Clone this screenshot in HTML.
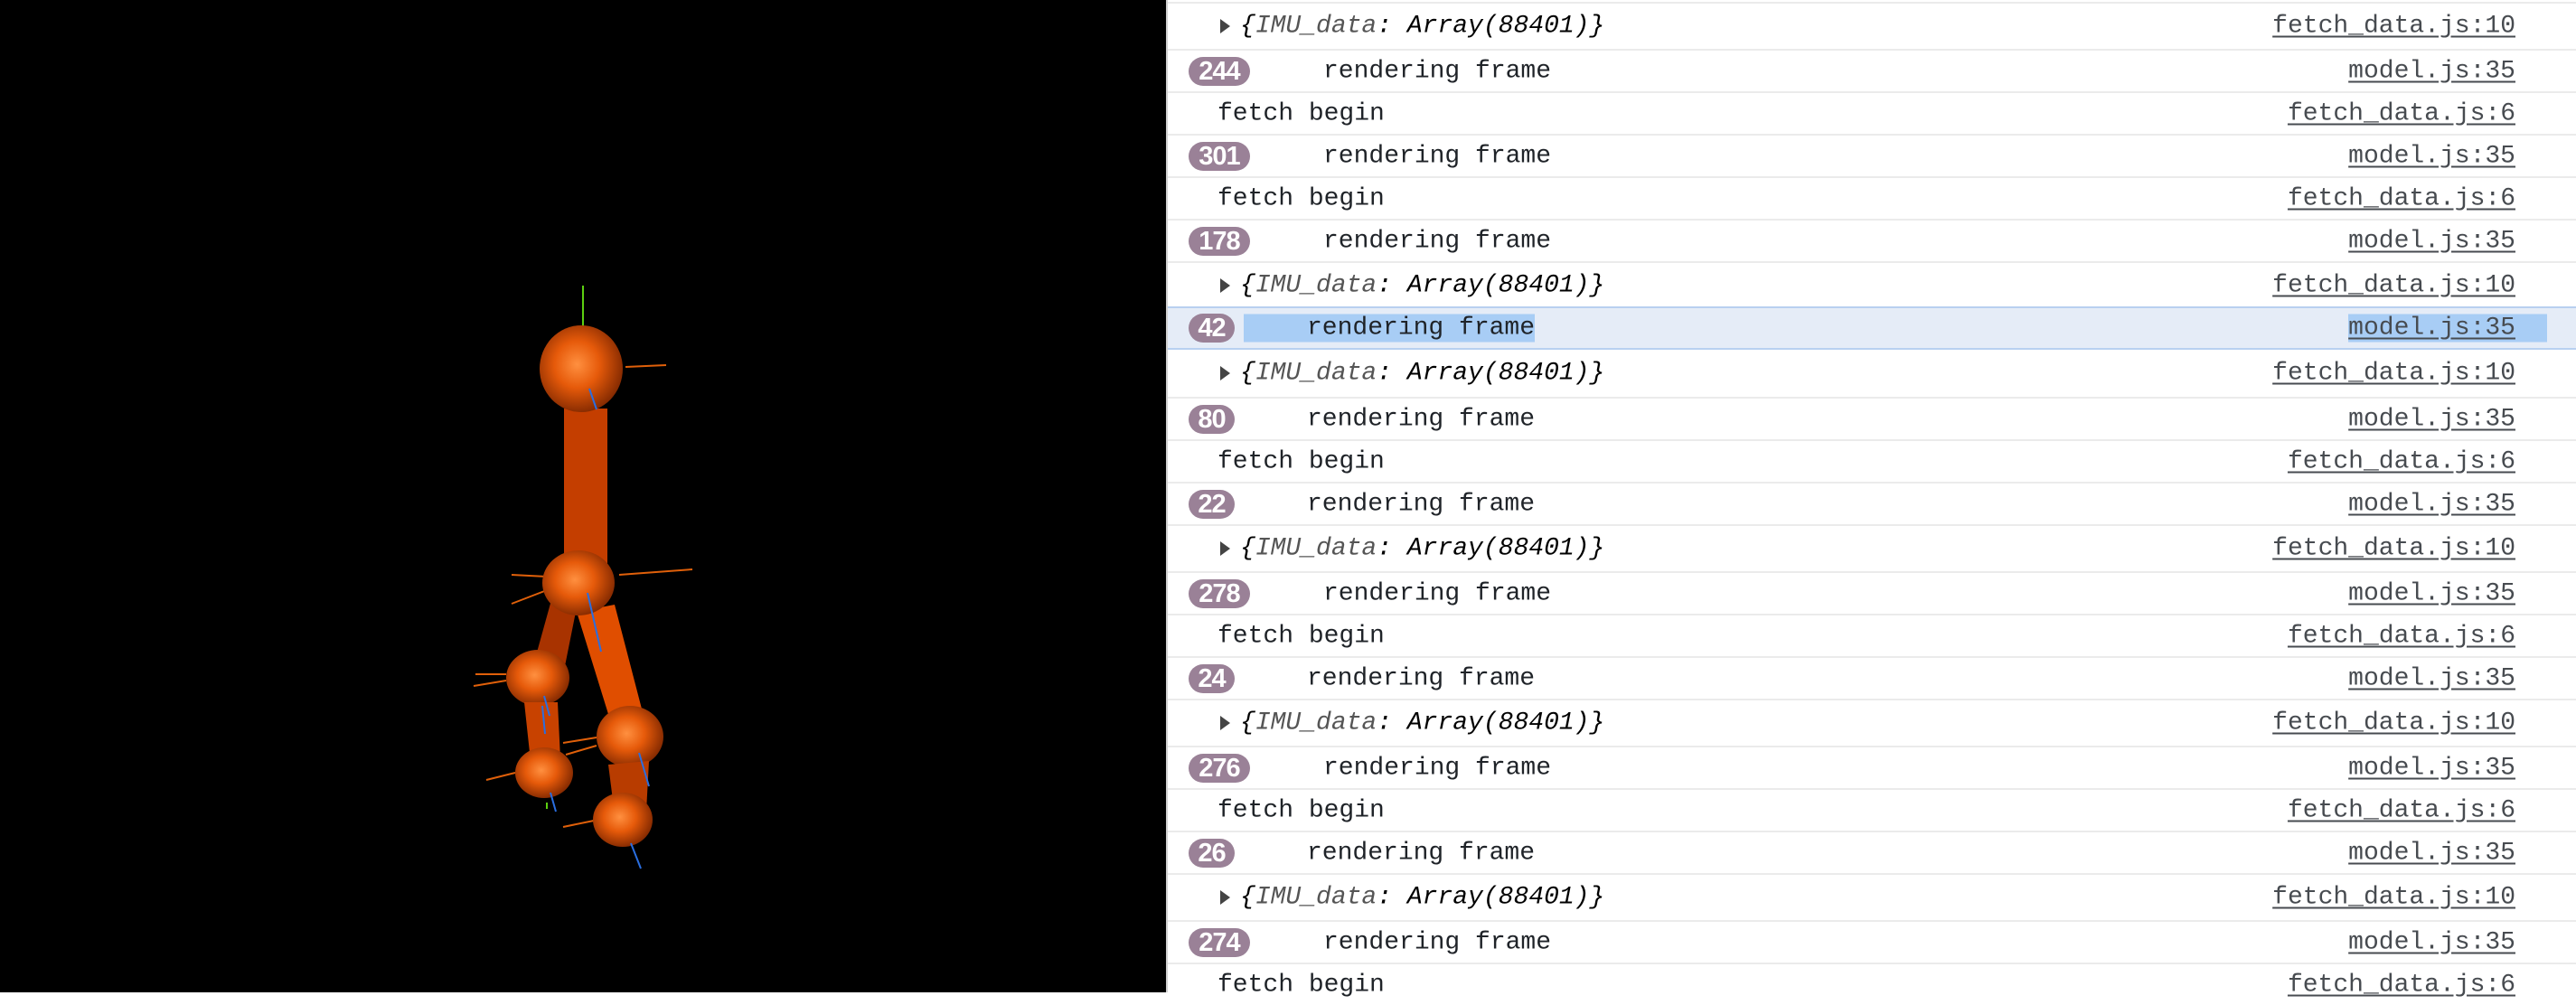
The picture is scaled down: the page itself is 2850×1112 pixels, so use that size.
<!DOCTYPE html>
<html><head><meta charset="utf-8"><style>
html,body{margin:0;padding:0;width:2850px;height:1098px;overflow:hidden;background:#fff}
#left{position:absolute;left:0;top:0;width:1290px;height:1098px;background:#000}
#con{position:absolute;left:1290px;top:0;width:1560px;height:1098px;border-left:2px solid #d0d0d0;box-sizing:border-box;font-family:"Liberation Mono",monospace;font-size:28px;color:#1f2328}
.r{position:absolute;left:0;right:0;border-top:2px solid #ebebeb;box-sizing:border-box}
.t{position:absolute;top:50%;transform:translateY(-50%);white-space:pre}
.l{position:absolute;right:67px;top:50%;transform:translateY(-50%);color:#474b50;text-decoration:underline;text-underline-offset:4px}
.b{position:absolute;left:23px;top:50%;transform:translateY(-50%);height:32px;border-radius:16px;background:#9a8197;color:#fff;font-family:"Liberation Sans",sans-serif;font-weight:bold;font-size:29px;line-height:33px;text-align:center;letter-spacing:-1px}
.b3{width:68px}.b2{width:51px}
.ar{position:absolute;left:58px;top:50%;transform:translateY(-50%);width:0;height:0;border-left:11px solid #444;border-top:8px solid transparent;border-bottom:8px solid transparent}
i{color:#000}
.hl{background:#e5ecf7;border-top:2px solid #b8d0f0;border-bottom:2px solid #b8d0f0}
.sel{background:#a8cdf5}
</style></head><body>
<div id="left">
<svg width="1290" height="1098">
<defs>
<radialGradient id="g" cx="0.45" cy="0.45" r="0.6"><stop offset="0" stop-color="#ff9040"/><stop offset="0.45" stop-color="#e65a0a"/><stop offset="1" stop-color="#7a2500"/></radialGradient>
</defs>
<g stroke-width="2" stroke="#e0600a">
<line x1="645" y1="316" x2="645" y2="363" stroke="#5ccf10"/>
<line x1="692" y1="406" x2="737" y2="404"/>
<line x1="566" y1="636" x2="605" y2="638"/>
<line x1="566" y1="668" x2="605" y2="653"/>
<line x1="685" y1="636" x2="766" y2="630"/>
<line x1="526" y1="746" x2="560" y2="746"/>
<line x1="524" y1="759" x2="560" y2="753"/>
<line x1="623" y1="822" x2="660" y2="816"/>
<line x1="626" y1="835" x2="660" y2="825"/>
<line x1="538" y1="863" x2="570" y2="855"/>
<line x1="623" y1="915" x2="657" y2="908"/>
</g>
<polygon points="624,452 672,452 672,625 624,625" fill="#c43e00"/>
<polygon points="610,664 637,677 623,747 587,747" fill="#a83300"/>
<polygon points="638,677 680,669 712,792 677,803" fill="#e04e00"/>
<ellipse cx="643" cy="408" rx="46" ry="48" fill="url(#g)"/>
<ellipse cx="640" cy="645" rx="40" ry="36" fill="url(#g)"/>
<ellipse cx="595" cy="750" rx="35" ry="31" fill="url(#g)"/>
<ellipse cx="697" cy="815" rx="37" ry="34" fill="url(#g)"/>
<polygon points="580,777 617,777 620,840 587,842" fill="#c84200"/>
<polygon points="673,846 718,842 715,898 680,901" fill="#b83c00"/>
<ellipse cx="602" cy="855" rx="32" ry="28" fill="url(#g)"/>
<ellipse cx="689" cy="907" rx="33" ry="30" fill="url(#g)"/>
<g stroke="#2a6ee0" stroke-width="2">
<line x1="652" y1="430" x2="660" y2="453"/>
<line x1="650" y1="656" x2="665" y2="721"/>
<line x1="602" y1="770" x2="608" y2="792"/>
<line x1="600" y1="781" x2="603" y2="812"/>
<line x1="707" y1="833" x2="718" y2="870"/>
<line x1="609" y1="877" x2="615" y2="898"/>
<line x1="698" y1="933" x2="709" y2="961"/>
</g>
<line x1="605" y1="888" x2="605" y2="895" stroke="#5ccf10" stroke-width="2"/>
</svg>
</div>
<div id="con">
<div class="r" style="top:2px;height:52px"><div class="ar"></div><span class="t" style="left:80px"><i style="font-style:italic">{<span style="color:#555">IMU_data</span>: Array(88401)}</i></span><span class="l">fetch_data.js:10</span></div>
<div class="r" style="top:54px;height:47px"><span class="b b3">244</span><span class="t" style="left:172px">rendering frame</span><span class="l">model.js:35</span></div>
<div class="r" style="top:101px;height:47px"><span class="t" style="left:55px">fetch begin</span><span class="l">fetch_data.js:6</span></div>
<div class="r" style="top:148px;height:47px"><span class="b b3">301</span><span class="t" style="left:172px">rendering frame</span><span class="l">model.js:35</span></div>
<div class="r" style="top:195px;height:47px"><span class="t" style="left:55px">fetch begin</span><span class="l">fetch_data.js:6</span></div>
<div class="r" style="top:242px;height:47px"><span class="b b3">178</span><span class="t" style="left:172px">rendering frame</span><span class="l">model.js:35</span></div>
<div class="r" style="top:289px;height:52px"><div class="ar"></div><span class="t" style="left:80px"><i style="font-style:italic">{<span style="color:#555">IMU_data</span>: Array(88401)}</i></span><span class="l">fetch_data.js:10</span></div>
<div class="r hl" style="top:339px;height:48px"><span class="b b2">42</span><span class="t sel" style="left:84px;padding-left:70px">rendering frame</span><span class="l sel" style="right:32px;padding-right:35px">model.js:35</span></div>
<div class="r" style="top:387px;height:52px;border-top:none"><div class="ar"></div><span class="t" style="left:80px"><i style="font-style:italic">{<span style="color:#555">IMU_data</span>: Array(88401)}</i></span><span class="l">fetch_data.js:10</span></div>
<div class="r" style="top:439px;height:47px"><span class="b b2">80</span><span class="t" style="left:154px">rendering frame</span><span class="l">model.js:35</span></div>
<div class="r" style="top:486px;height:47px"><span class="t" style="left:55px">fetch begin</span><span class="l">fetch_data.js:6</span></div>
<div class="r" style="top:533px;height:47px"><span class="b b2">22</span><span class="t" style="left:154px">rendering frame</span><span class="l">model.js:35</span></div>
<div class="r" style="top:580px;height:52px"><div class="ar"></div><span class="t" style="left:80px"><i style="font-style:italic">{<span style="color:#555">IMU_data</span>: Array(88401)}</i></span><span class="l">fetch_data.js:10</span></div>
<div class="r" style="top:632px;height:47px"><span class="b b3">278</span><span class="t" style="left:172px">rendering frame</span><span class="l">model.js:35</span></div>
<div class="r" style="top:679px;height:47px"><span class="t" style="left:55px">fetch begin</span><span class="l">fetch_data.js:6</span></div>
<div class="r" style="top:726px;height:47px"><span class="b b2">24</span><span class="t" style="left:154px">rendering frame</span><span class="l">model.js:35</span></div>
<div class="r" style="top:773px;height:52px"><div class="ar"></div><span class="t" style="left:80px"><i style="font-style:italic">{<span style="color:#555">IMU_data</span>: Array(88401)}</i></span><span class="l">fetch_data.js:10</span></div>
<div class="r" style="top:825px;height:47px"><span class="b b3">276</span><span class="t" style="left:172px">rendering frame</span><span class="l">model.js:35</span></div>
<div class="r" style="top:872px;height:47px"><span class="t" style="left:55px">fetch begin</span><span class="l">fetch_data.js:6</span></div>
<div class="r" style="top:919px;height:47px"><span class="b b2">26</span><span class="t" style="left:154px">rendering frame</span><span class="l">model.js:35</span></div>
<div class="r" style="top:966px;height:52px"><div class="ar"></div><span class="t" style="left:80px"><i style="font-style:italic">{<span style="color:#555">IMU_data</span>: Array(88401)}</i></span><span class="l">fetch_data.js:10</span></div>
<div class="r" style="top:1018px;height:47px"><span class="b b3">274</span><span class="t" style="left:172px">rendering frame</span><span class="l">model.js:35</span></div>
<div class="r" style="top:1065px;height:47px"><span class="t" style="left:55px">fetch begin</span><span class="l">fetch_data.js:6</span></div>
</div>
</body></html>
